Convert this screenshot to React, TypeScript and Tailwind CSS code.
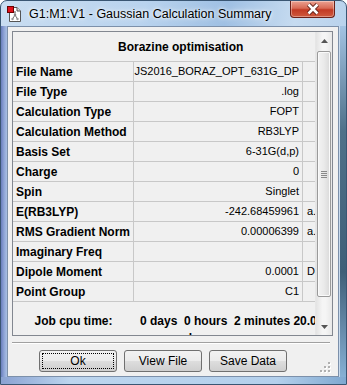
import React from "react";

const rows: [string, string, string][] = [
  ["File Name", "JS2016_BORAZ_OPT_631G_DP", ""],
  ["File Type", ".log", ""],
  ["Calculation Type", "FOPT", ""],
  ["Calculation Method", "RB3LYP", ""],
  ["Basis Set", "6-31G(d,p)", ""],
  ["Charge", "0", ""],
  ["Spin", "Singlet", ""],
  ["E(RB3LYP)", "-242.68459961", "a.u."],
  ["RMS Gradient Norm", "0.00006399", "a.u."],
  ["Imaginary Freq", "", ""],
  ["Dipole Moment", "0.0001", "Debye"],
  ["Point Group", "C1", ""],
];

function AppIcon() {
  return (
    <svg width="15" height="16" viewBox="0 0 15 16" className="shrink-0">
      <path d="M2.5 1.5 H10 L13.5 5 V15.5 H2.5 Z" fill="#fff" stroke="#555" />
      <path d="M10 1.5 V5 H13.5" fill="#ddd" stroke="#555" />
      <line x1="8" y1="9" x2="5.5" y2="13" stroke="#777" strokeWidth="1" />
      <line x1="8" y1="9" x2="10.5" y2="13" stroke="#777" strokeWidth="1" />
      <line x1="8" y1="9" x2="8" y2="6" stroke="#777" strokeWidth="1" />
      <circle cx="8" cy="9" r="1.3" fill="#888" />
      <circle cx="5.5" cy="13" r="1.2" fill="#999" />
      <circle cx="10.5" cy="13" r="1.2" fill="#999" />
      <circle cx="8" cy="6" r="1.1" fill="#999" />
      <rect x="0.5" y="0.5" width="6" height="6" fill="#e0101a" stroke="#6a0000" />
    </svg>
  );
}

function Tri({ down }: { down?: boolean }) {
  return (
    <svg width="7" height="4" viewBox="0 0 7 4">
      {down ? <path d="M0 0 H7 L3.5 4 Z" fill="#555" /> : <path d="M0 4 H7 L3.5 0 Z" fill="#555" />}
    </svg>
  );
}

function Btn({ label, focused }: { label: string; focused?: boolean }) {
  return (
    <div className="w-[78px] h-[22px] rounded-[3px] border border-[#707070] bg-[linear-gradient(180deg,#f2f2f2_0%,#ebebeb_48%,#dddddd_52%,#cfcfcf_100%)] p-[2px]">
      <div
        className={
          "h-full w-full flex items-center justify-center text-[12px] text-black " +
          (focused ? "border border-dotted border-black" : "border border-transparent")
        }
      >
        {label}
      </div>
    </div>
  );
}

export default function App() {
  const font = { fontFamily: '"Liberation Sans", Arial, sans-serif' };
  return (
    <div
      className="w-[347px] h-[385px] overflow-hidden rounded-t-[7px] border border-[#3a5673] flex flex-col bg-[linear-gradient(100deg,#c9ddf1_0%,#b9d3ee_35%,#9fc0e3_55%,#c6dbf0_72%,#a9c8e8_100%)]"
      style={font}
    >
      {/* Title bar */}
      <div className="h-[25px] flex items-start shrink-0">
        <div className="flex items-center pl-[6px] pt-[5px] gap-[7px]">
          <AppIcon />
          <span className="text-[12.5px] text-black leading-none [text-shadow:0_0_6px_#fff,0_0_3px_#fff]">
            G1:M1:V1 - Gaussian Calculation Summary
          </span>
        </div>
        <div className="ml-auto mr-[11px] w-[45px] h-[17px] rounded-b-[4px] border border-t-0 border-[#6b2018] bg-[linear-gradient(180deg,#eba292_0%,#d86a55_45%,#c23a24_55%,#cf5a3e_100%)] flex items-center justify-center shadow-[inset_0_0_0_1px_rgba(255,255,255,0.35)]">
          <svg width="14" height="12" viewBox="0 0 14 12">
            <path d="M2.5 1.5 L11.5 10.5 M11.5 1.5 L2.5 10.5" stroke="#5a1c14" strokeWidth="4.4" fill="none" />
            <path d="M2.5 1.5 L11.5 10.5 M11.5 1.5 L2.5 10.5" stroke="#fff" strokeWidth="2.6" fill="none" />
          </svg>
        </div>
      </div>

      {/* Middle */}
      <div className="flex flex-1 min-h-0">
        <div className="w-[6px] bg-[linear-gradient(90deg,#6a7fbd_0%,#8ea4d6_50%,#a9c0e4_100%)]" />
        <div className="relative w-[332px] border border-[#7c90aa] bg-[#f0f0f0] flex flex-col pl-[4px] pt-[4px]">
          {/* Table box */}
          <div className="w-[321px] h-[305px] border border-[#828790] flex bg-[#f0f0f0]">
            <div className="w-[302px] overflow-hidden flex flex-col">
              <div className="h-[30px] shrink-0 border-b border-[#c8c8c8] flex items-center pl-[105px] text-[12px] font-bold text-black whitespace-nowrap">
                Borazine optimisation
              </div>
              {rows.map(([k, v, u]) => (
                <div key={k} className="h-[20px] shrink-0 border-b border-[#c8c8c8] flex text-black">
                  <div className="w-[121px] shrink-0 border-r border-[#c8c8c8] pl-[3px] flex items-center text-[12px] font-bold whitespace-nowrap overflow-hidden">
                    {k}
                  </div>
                  <div className="w-[169px] shrink-0 border-r border-[#c8c8c8] pr-[3px] flex items-center justify-end text-[11px] whitespace-nowrap overflow-hidden">
                    {v}
                  </div>
                  <div className="w-[12px] shrink-0 pl-[4px] flex items-center text-[11px] whitespace-nowrap overflow-hidden">
                    {u}
                  </div>
                </div>
              ))}
              <div className="flex shrink-0 pt-[12px] text-[12px] font-bold text-black leading-[15px]">
                <div className="w-[121px] shrink-0 text-center whitespace-nowrap">Job cpu time:</div>
                <div className="pl-[6px] shrink-0 whitespace-pre">
                  <div>{"0 days  0 hours  2 minutes 20.0"}</div>
                  <div className="pl-[10px] mt-[2px]">seconds</div>
                </div>
              </div>
            </div>
            {/* Scrollbar */}
            <div className="w-[17px] flex flex-col bg-[linear-gradient(90deg,#e3e3e3_0%,#f5f5f5_40%,#f5f5f5_60%,#e8e8e8_100%)] border-l border-[#e6e6e6]">
              <div className="h-[17px] flex items-center justify-center">
                <Tri />
              </div>
              <div className="flex-1 pt-[2px] flex justify-center">
                <div className="w-[14px] h-[246px] rounded-[2px] border border-[#9a9a9a] bg-[linear-gradient(90deg,#f3f3f3_0%,#eaeaea_50%,#d9d9d9_100%)] flex flex-col items-center justify-center gap-[1px] shadow-[inset_0_0_0_1px_#fafafa]">
                  <div className="w-[6px] h-[1px] bg-[#8a8a8a]" />
                  <div className="w-[6px] h-[1px] bg-[#8a8a8a]" />
                  <div className="w-[6px] h-[1px] bg-[#8a8a8a]" />
                  <div className="w-[6px] h-[1px] bg-[#8a8a8a]" />
                </div>
              </div>
              <div className="h-[17px] flex items-center justify-center">
                <Tri down />
              </div>
            </div>
          </div>
          {/* Separator */}
          <div className="mt-[6px] w-[318px] h-[1px] bg-[#a0a0a0]" />
          <div className="w-[318px] h-[1px] bg-white" />
          {/* Buttons */}
          <div className="mt-[6px] ml-[27px] flex gap-[7px]">
            <Btn label="Ok" focused />
            <Btn label="View File" />
            <Btn label="Save Data" />
          </div>
          {/* size grip */}
          <svg className="absolute right-[7px] bottom-[3px]" width="11" height="11" viewBox="0 0 11 11">
            {[
              [8, 0],
              [4, 4],
              [8, 4],
              [0, 8],
              [4, 8],
              [8, 8],
            ].map(([x, y], i) => (
              <g key={i}>
                <rect x={x + 1} y={y + 1} width="2" height="2" fill="#fff" />
                <rect x={x} y={y} width="2" height="2" fill="#b0b0b0" />
              </g>
            ))}
          </svg>
        </div>
        <div className="w-[7px] bg-[linear-gradient(180deg,#a3c3e3_0%,#4f7189_30%,#3f5f78_70%,#86b0d4_100%)] border-l border-[#c9dbee]" />
      </div>

      {/* Bottom frame */}
      <div className="h-[7px] shrink-0 bg-[linear-gradient(90deg,#8aa2d2_0%,#bcd5ee_20%,#b4d0ec_80%,#7fa8d0_100%)]" />
    </div>
  );
}
